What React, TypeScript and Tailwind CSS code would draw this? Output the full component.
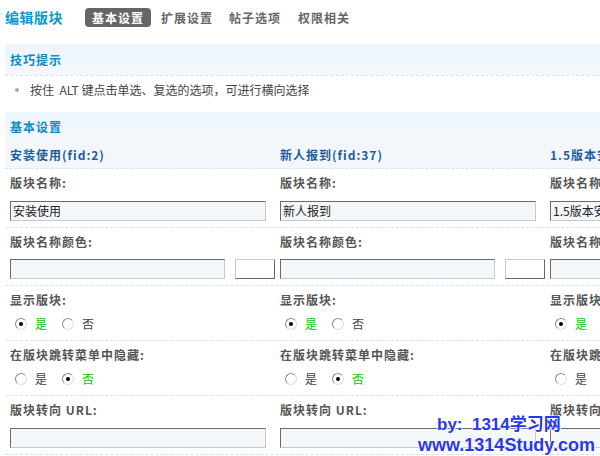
import React from "react";

const font = "font-['SimSun','Noto_Sans_CJK_SC',sans-serif]";

const columns = [
  { title: "安装使用(fid:2)", name: "安装使用" },
  { title: "新人报到(fid:37)", name: "新人报到" },
  { title: "1.5版本安装(fid:41)", name: "1.5版本安装" },
];

// radio drawn by hand, windows-classic look
const Radio = ({ checked }: { checked: boolean }) => (
  <span className="w-[12px] h-[12px] rounded-full border border-t-[#8a8a80] border-l-[#8a8a80] border-b-[#e0dfd8] border-r-[#e0dfd8] bg-white flex items-center justify-center">
    {checked && <span className="w-[4px] h-[4px] rounded-full bg-black" />}
  </span>
);

const RadioPair = ({ yes }: { yes: boolean }) => (
  <div className="flex items-center h-[22px] pl-[5px] text-[12px]">
    <Radio checked={yes} />
    <span className={`ml-[8px] ${yes ? "text-[#00cc00]" : "text-[#444]"}`}>是</span>
    <span className="ml-[15px]">
      <Radio checked={!yes} />
    </span>
    <span className={`ml-[8px] ${!yes ? "text-[#00cc00]" : "text-[#444]"}`}>否</span>
  </div>
);

const TextInput = ({ value, w = "w-[256px]" }: { value?: string; w?: string }) => (
  <div
    className={`${w} h-[20px] border border-t-[#6a6a6a] border-l-[#6a6a6a] border-b-[#c8c8c8] border-r-[#c8c8c8] bg-[#f4f7fa] text-[12px] text-[#222] leading-[18px] px-[2px] whitespace-nowrap overflow-hidden`}
  >
    {value}
  </div>
);

const Label = ({ children }: { children: React.ReactNode }) => (
  <div className="h-[27px] flex items-center text-[12px] font-bold text-[#555] tracking-[1px]">{children}</div>
);

type Field = {
  label: string;
  kind: "name" | "color" | "show" | "hide" | "url";
};

const fields: Field[] = [
  { label: "版块名称:", kind: "name" },
  { label: "版块名称颜色:", kind: "color" },
  { label: "显示版块:", kind: "show" },
  { label: "在版块跳转菜单中隐藏:", kind: "hide" },
  { label: "版块转向 URL:", kind: "url" },
];

const Cell = ({ field, col }: { field: Field; col: (typeof columns)[number] }) => {
  let body: React.ReactNode = null;
  if (field.kind === "name") body = <div className="pt-[5px] pb-[6px]"><TextInput value={col.name} /></div>;
  if (field.kind === "url") body = <div className="pt-[5px] pb-[6px]"><TextInput /></div>;
  if (field.kind === "color")
    body = (
      <div className="pt-[4px] pb-[6px] flex gap-[10px]">
        <TextInput w="w-[216px]" />
        <div className="w-[40px] h-[20px] shrink-0 border border-t-[#c8c8c8] border-l-[#c8c8c8] border-b-[#6a6a6a] border-r-[#6a6a6a] bg-white" />
      </div>
    );
  if (field.kind === "show") body = <div className="pb-[5px]"><RadioPair yes={true} /></div>;
  if (field.kind === "hide") body = <div className="pb-[5px]"><RadioPair yes={false} /></div>;
  return (
    <div className="w-[270px] shrink-0 pl-[5px]">
      <Label>{field.label}</Label>
      {body}
    </div>
  );
};

const SectionTitle = ({ children }: { children: React.ReactNode }) => (
  <div className="h-[29px] flex items-center pl-[5px] text-[12px] font-bold text-[#0a8cc6] tracking-[1px] bg-gradient-to-b from-[#edf5fd] from-60% to-[#f3f7fb] to-60%">
    {children}
  </div>
);

export default function App() {
  return (
    <div className={`relative w-[600px] h-[456px] overflow-hidden bg-white ${font}`}>
      {/* Header */}
      <div className="h-[44px] flex items-start pt-[8px] pl-[5px]">
        <div className="w-[58px] h-[19px] flex items-center text-[14px] font-bold text-[#0b98d0] tracking-[0.5px] whitespace-nowrap">编辑版块</div>
        <div className="flex items-center ml-[22px] text-[12px] font-bold tracking-[1px]">
          <span className="h-[19px] px-[7px] flex items-center rounded-[4px] bg-[#666] text-white">基本设置</span>
          <span className="ml-[10px] text-[#666]">扩展设置</span>
          <span className="ml-[16px] text-[#666]">帖子选项</span>
          <span className="ml-[17px] text-[#666]">权限相关</span>
        </div>
      </div>

      <div className="ml-[5px] w-[900px]">
        {/* Tips */}
        <div className="border-b border-dashed border-[#d6e4ef]">
          <div className="h-[31px] flex items-center pl-[5px] text-[12px] font-bold text-[#0a8cc6] tracking-[1px] bg-gradient-to-b from-[#edf5fd] from-55% to-[#f3f7fb] to-55%">
            技巧提示
          </div>
        </div>
        <div className="h-[28px] flex items-center pl-[10px] text-[12px] text-[#444]">
          <span className="w-[4px] h-[4px] rounded-full bg-[#aaa] mr-[11px]" />
          <span>按住&nbsp;&nbsp;ALT 键点击单选、复选的选项，可进行横向选择</span>
        </div>

        {/* Basic settings */}
        <div className="mt-[8px]">
          <SectionTitle>基本设置</SectionTitle>
          <div className="flex h-[28px] items-center bg-[#f3f7fb] border-b border-dashed border-[#d6e4ef]">
            {columns.map((c) => (
              <div key={c.title} className="w-[270px] shrink-0 pl-[5px] text-[12px] font-bold text-[#1c5ea0] tracking-[1px] whitespace-nowrap">
                {c.title}
              </div>
            ))}
          </div>
          {fields.map((f) => (
            <div key={f.label} className="flex border-b border-dashed border-[#d6e4ef]">
              {columns.map((c) => (
                <Cell key={c.title} field={f} col={c} />
              ))}
            </div>
          ))}
        </div>
      </div>

      {/* watermark */}
      <div className="absolute left-[418px] top-[414px] flex flex-col items-start font-['Liberation_Sans','Noto_Sans_CJK_SC',sans-serif] font-bold text-[#2838f0] leading-[21px] [text-shadow:0_0_2px_#fff,0_0_2px_#fff,1px_1px_1px_#fff]">
        <span className="ml-[19px] text-[17px]">by:&nbsp;&nbsp;1314学习网</span>
        <span className="text-[18px]">www.1314Study.com</span>
      </div>
    </div>
  );
}
